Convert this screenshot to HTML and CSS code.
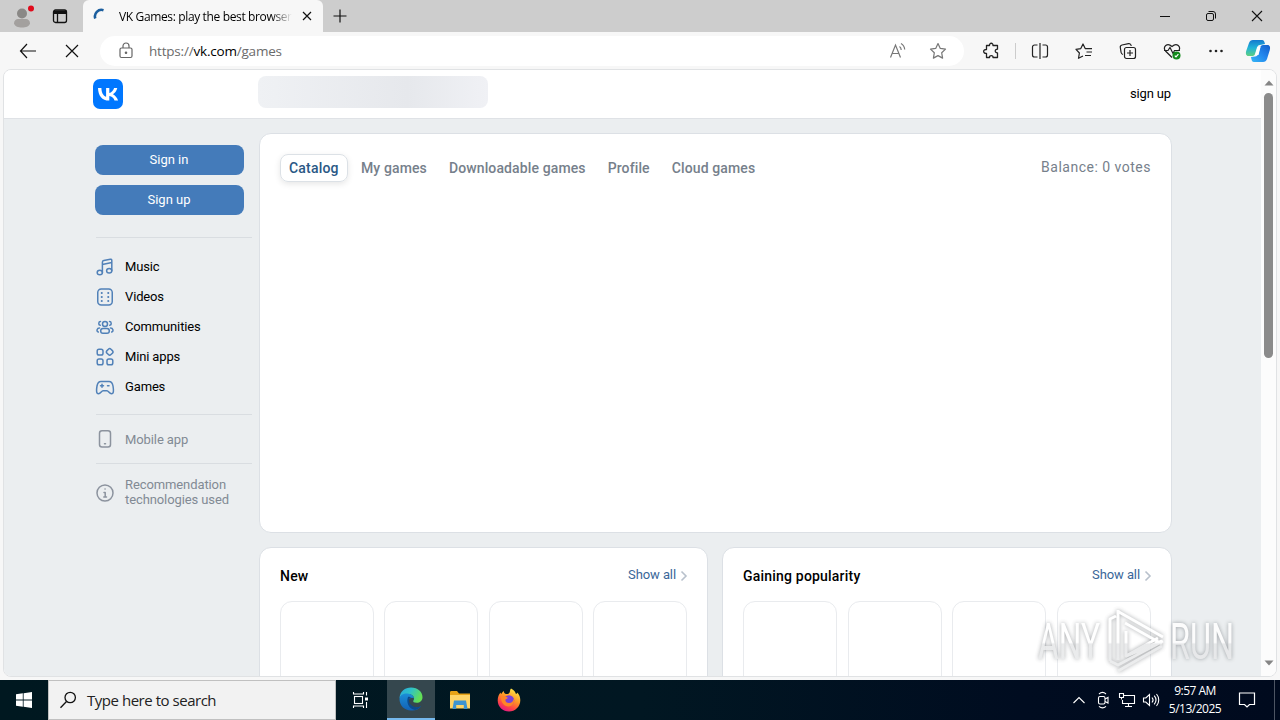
FILE: index.html
```html
<!DOCTYPE html>
<html lang="en">
<head>
    <meta charset="UTF-8">
    <meta name="viewport" content="width=device-width, initial-scale=1.0">
    <title>VK Games: play the best browser games</title>
    <link rel="stylesheet" href="styles.css">
</head>
<body>
<div class="desktop">

    <!-- tab strip -->
    <div class="tabstrip">
        <div class="tab-tools">
            <svg class="profile" width="24" height="28" viewBox="0 0 24 28">
                <circle cx="12" cy="11.500" r="5" fill="#8a8886"/>
                <path d="M4 21.500c0-3 2-4.500 4-4.500h8c2 0 4 1.500 4 4.500-1 3-4 4-8 4s-7-1-8-4z" fill="#a3a09e"/>
                <circle cx="21" cy="6.500" r="3" fill="#e00b1c"/>
            </svg>
            <svg width="16" height="16" viewBox="0 0 16 16" fill="none" stroke="#111" stroke-width="1.300">
                <rect x="1.500" y="2" width="13" height="12.500" rx="2"/>
                <path d="M2 3.500h12M2 5h12" stroke-width="2"/>
                <path d="M5.500 5v9"/>
            </svg>
        </div>
        <div class="tab">
            <svg class="spinner" width="16" height="16" viewBox="0 0 16 16" fill="none">
                <path d="M2.300 10.500A6.500 6.500 0 0 1 10.500 2.200" stroke="#1b5e9e" stroke-width="2.600"/>
            </svg>
            <span class="tab-title">VK Games: play the best browser</span>
            <svg width="10" height="10" viewBox="0 0 10 10" stroke="#111" stroke-width="1.200"><path d="M1 1l8 8M9 1l-8 8"/></svg>
        </div>
        <svg class="new-tab" width="14" height="14" viewBox="0 0 14 14" stroke="#111" stroke-width="1.200"><path d="M7 .500v13M.500 7h13"/></svg>
        <div class="window-buttons">
            <svg width="12" height="12" viewBox="0 0 12 12" stroke="#111"><path d="M1 6.500h10"/></svg>
            <svg width="12" height="12" viewBox="0 0 12 12" fill="none" stroke="#111"><rect x="1.500" y="3.500" width="7" height="7" rx="1.500"/><path d="M3.500 1.500h4.500a2.500 2.500 0 0 1 2.500 2.500v4.500"/></svg>
            <svg width="12" height="12" viewBox="0 0 12 12" stroke="#111" stroke-width="1.100"><path d="M1 1l10 10M11 1L1 11"/></svg>
        </div>
    </div>

    <!-- toolbar -->
    <div class="toolbar">
        <svg class="back" width="18" height="16" viewBox="0 0 18 16" fill="none" stroke="#111" stroke-width="1.200"><path d="M8 1L1.500 8 8 15M1.500 8H17"/></svg>
        <svg class="stop" width="14" height="14" viewBox="0 0 14 14" stroke="#111" stroke-width="1.200"><path d="M1 1l12 12M13 1L1 13"/></svg>
        <div class="address">
            <svg width="14" height="17" viewBox="0 0 14 17" fill="none" stroke="#666" stroke-width="1.200"><rect x="1" y="6" width="12" height="9.500" rx="1.500"/><path d="M4 6V4a3 3 0 0 1 6 0v2"/><circle cx="7" cy="10.800" r=".700" fill="#666"/></svg>
            <span class="url">https://<b>vk.com</b>/games</span>
            <svg class="read" width="18" height="18" viewBox="0 0 18 18" fill="none" stroke="#777" stroke-width="1.200"><path d="M1.500 15.500L6.500 3 11.500 15.500M3.300 11.500h6.500M10.500 4.500c1.200.8 1.700 2 1.700 3.500M12 1.500c2.300 1.300 3.500 3.300 3.700 6"/></svg>
            <svg class="fav" width="18" height="18" viewBox="0 0 18 18" fill="none" stroke="#777" stroke-width="1.200" stroke-linejoin="round"><path d="M9 1.500l2.300 4.900 5.200.700-3.800 3.700.900 5.300L9 13.600l-4.600 2.500.900-5.300L1.500 7.100l5.200-.700z"/></svg>
        </div>
        <div class="actions">
            <svg width="18" height="18" viewBox="0 0 18 18" fill="none" stroke="#222" stroke-width="1.300" stroke-linejoin="round"><path d="M4.500 3.500h3c-.300-3 3.800-3 3.500 0h4.500v3.700c-3-.200-3 3.800 0 3.600v4.700H11c.300-2.500-3.700-2.500-3.500 0h-3v-4.200c-3.800.500-3.800-4 0-3.800z"/></svg>
            <i class="divider"></i>
            <svg width="18" height="18" viewBox="0 0 18 18" fill="none" stroke="#222" stroke-width="1.200"><path d="M6.500 3H3.500a2 2 0 0 0-2 2v8a2 2 0 0 0 2 2h3M11.500 3h3a2 2 0 0 1 2 2v8a2 2 0 0 1-2 2h-3M9 1v16"/></svg>
            <svg width="18" height="18" viewBox="0 0 18 18" fill="none" stroke="#222" stroke-width="1.200" stroke-linejoin="round"><path d="M8 14l-4.500 2.300.900-5.300L1 7.300l4.800-.700L8 2l2.200 4.600H17M11.500 10H17M10 13.500h6"/></svg>
            <svg width="18" height="18" viewBox="0 0 18 18" fill="none" stroke="#222" stroke-width="1.200"><rect x="5.500" y="5.500" width="11" height="11" rx="2"/><path d="M11 8v6M8 11h6M4 12.500c-1.200-.300-1.700-1-1.900-2l-.800-5C1 4 1.800 3.300 3 3l6.500-1.300c1.500-.200 2.500.500 2.700 2.300"/></svg>
            <svg width="18" height="18" viewBox="0 0 18 18" fill="none" stroke="#222" stroke-width="1.200"><path d="M9 15.500L2.500 9C-.500 5 4 0 9 4.500 14 0 18.500 5 15.500 9"/><path d="M1 8.500h4l2-3 3 6 1.500-3H17"/><circle cx="13.500" cy="13.500" r="4" fill="#138a1b" stroke="none"/><path d="M11.800 13.600l1.200 1.200 2.400-2.600" stroke="#fff"/></svg>
            <svg width="18" height="18" viewBox="0 0 18 18" fill="#222"><circle cx="3.500" cy="9" r="1.300"/><circle cx="9" cy="9" r="1.300"/><circle cx="14.500" cy="9" r="1.300"/></svg>
            <svg class="copilot" width="26" height="24" viewBox="0 0 26 24">
                <defs>
                    <linearGradient id="cp1" x1="0" y1="0" x2="0" y2="1"><stop offset="0" stop-color="#1579ce"/><stop offset=".5" stop-color="#22b4d8"/><stop offset="1" stop-color="#5fd080"/></linearGradient>
                    <linearGradient id="cp2" x1="0" y1="1" x2="1" y2="0"><stop offset="0" stop-color="#36b7f5"/><stop offset=".5" stop-color="#2387ee"/><stop offset="1" stop-color="#135cc9"/></linearGradient>
                </defs>
                <path d="M8 1h9c2 0 2.500 2 3 4l-5 1c-2 0-3 2-3.500 4L10 15c-.500 1.500-1.500 2-3 2H3.500C1 17 .500 14.500 1.200 12L4 4c.7-2 2-3 4-3z" fill="url(#cp1)"/>
                <path d="M18 23H9c-2 0-2.500-2-3-5l4-.500c2 0 3-1.500 3.500-3.500L15 9c.500-2 1.500-3 3-3h4.500c2.500 0 3 2.500 2.300 5L22 20c-.7 2-2 3-4 3z" fill="url(#cp2)"/>
                <path d="M12.500 8h3l-2 8h-3.300z" fill="#fff"/>
            </svg>
        </div>
    </div>

    <!-- page -->
    <div class="window">
        <div class="page">
            <header class="vk-header">
                <svg class="vk-logo" width="30" height="30" viewBox="0 0 30 30">
                    <rect width="30" height="30" rx="7" fill="#07f"/>
                    <path d="M16 21.600C9.100 21.600 5.200 16.900 5 9h3.400c.1 5.800 2.700 8.200 4.700 8.700V9h3.200v5c2-.2 4.100-2.500 4.800-5h3.200c-.5 3-2.800 5.300-4.400 6.200 1.600.8 4.200 2.800 5.200 6.400h-3.600c-.7-2.400-2.600-4.200-5.200-4.500v4.500z" fill="#fff"/>
                </svg>
                <div class="search-skeleton"></div>
                <a class="header-link">sign up</a>
            </header>

            <div class="vk-body">
                <nav class="sidebar">
                    <button class="btn">Sign in</button>
                    <button class="btn">Sign up</button>
                    <hr>
                    <a class="nav-item">
                        <svg width="20" height="20" viewBox="0 0 20 20"><ellipse cx="4.800" cy="15.500" rx="2.600" ry="2.300"/><ellipse cx="14.200" cy="13.700" rx="2.600" ry="2.300"/><path d="M7.400 15.500V5.200c0-1 .4-1.500 1.400-1.700l6.500-1.300c1-.2 1.500.2 1.500 1.200v10.300M7.400 7.500l9.400-1.900"/></svg>
                        <span>Music</span>
                    </a>
                    <a class="nav-item">
                        <svg width="20" height="20" viewBox="0 0 20 20"><rect x="2.750" y="2" width="14.500" height="16" rx="3.500"/><path class="dots" d="M6.700 6h.1M6.700 10h.1M6.700 14h.1M13.200 6h.1M13.200 10h.1M13.200 14h.1"/></svg>
                        <span>Videos</span>
                    </a>
                    <a class="nav-item">
                        <svg width="20" height="20" viewBox="0 0 20 20"><circle cx="10" cy="7" r="2.500"/><rect x="5.700" y="11.500" width="8.600" height="4.700" rx="2.300"/><path d="M5.500 4.500c-2 0-2.500 3.500-.3 3.800M14.500 4.500c2 0 2.500 3.500.3 3.800M4.500 11c-2.500 0-3.500 3.500-1.200 4M15.500 11c2.500 0 3.500 3.500 1.200 4"/></svg>
                        <span>Communities</span>
                    </a>
                    <a class="nav-item">
                        <svg width="20" height="20" viewBox="0 0 20 20"><rect x="2.200" y="2.200" width="5.800" height="5.800" rx="1.800"/><rect x="2.200" y="12" width="5.800" height="5.800" rx="1.800"/><rect x="12" y="12" width="5.800" height="5.800" rx="1.800"/><rect x="11.900" y="2.100" width="5.600" height="5.600" rx="1.800" transform="rotate(45 14.700 4.900)"/></svg>
                        <span>Mini apps</span>
                    </a>
                    <a class="nav-item">
                        <svg width="20" height="20" viewBox="0 0 20 20"><path d="M6 4.500h8c2.500 0 3.500 1.500 4 4.500.6 3.500 1 7.800-1.500 7.800-2.200 0-3-3-4.500-3H8c-1.500 0-2.300 3-4.500 3C1 16.800 1.400 12.500 2 9c.5-3 1.500-4.500 4-4.500zM7 7.300v3M5.500 8.800h3M12.500 8.800h1.500"/></svg>
                        <span>Games</span>
                    </a>
                    <hr class="tight">
                    <a class="nav-item muted mobile">
                        <svg width="20" height="20" viewBox="0 0 20 20"><rect x="4.500" y="1.700" width="11" height="16.300" rx="2.500"/><path d="M9.500 14.800h1"/></svg>
                        Mobile app
                    </a>
                    <hr class="tight">
                    <a class="nav-item muted tech">
                        <svg width="20" height="20" viewBox="0 0 20 20"><circle cx="10" cy="10" r="8"/><path d="M9 9.500h1.200V14M8.800 14h2.700M10 6h.1"/></svg>
                        <span>Recommendation<br>technologies used</span>
                    </a>
                </nav>

                <main class="content">
                    <section class="card catalog">
                        <div class="tabs">
                            <a class="tabs-item active">Catalog</a>
                            <a class="tabs-item">My games</a>
                            <a class="tabs-item">Downloadable games</a>
                            <a class="tabs-item">Profile</a>
                            <a class="tabs-item">Cloud games</a>
                        </div>
                        <span class="balance">Balance: 0 votes</span>
                    </section>
                    <div class="row">
                        <section class="card shelf">
                            <div class="shelf-head">
                                <h2>New</h2>
                                <a class="show-all">Show all <svg width="8" height="12" viewBox="0 0 8 12"><path d="M1.500 1.500L6 6l-4.500 4.500"/></svg></a>
                            </div>
                            <div class="tiles"><div class="tile"></div><div class="tile"></div><div class="tile"></div><div class="tile"></div></div>
                        </section>
                        <section class="card shelf">
                            <div class="shelf-head">
                                <h2>Gaining popularity</h2>
                                <a class="show-all">Show all <svg width="8" height="12" viewBox="0 0 8 12"><path d="M1.500 1.500L6 6l-4.500 4.500"/></svg></a>
                            </div>
                            <div class="tiles"><div class="tile"></div><div class="tile"></div><div class="tile"></div><div class="tile"></div></div>
                        </section>
                    </div>
                </main>
            </div>
        </div>
        <div class="scrollbar">
            <svg width="10" height="6" viewBox="0 0 10 6"><path d="M5 .500L9.500 5.500h-9z"/></svg>
            <div class="thumb"></div>
            <svg class="down" width="10" height="6" viewBox="0 0 10 6"><path d="M5 5.500L.500.500h9z"/></svg>
        </div>
    </div>

    <!-- taskbar -->
    <div class="taskbar">
        <div class="start">
            <svg width="16" height="16" viewBox="0 0 16 16" fill="#fff"><path d="M0 2.300L6.800 1.300v6.300H0zM7.600 1.200L16 0v7.600H7.600zM0 8.400h6.800v6.300L0 13.700zM7.600 8.400H16V16l-8.400-1.200z"/></svg>
        </div>
        <div class="search">
            <svg width="18" height="18" viewBox="0 0 18 18" fill="none" stroke="#111" stroke-width="1.300"><circle cx="11.200" cy="6.500" r="5.200"/><path d="M7.500 10.500L1.500 16.800"/></svg>
            <span>Type here to search</span>
        </div>
        <div class="task">
            <svg width="18" height="18" viewBox="0 0 18 18" fill="none" stroke="#fff" stroke-width="1.100"><rect x="2.500" y="5.500" width="8" height="7"/><path d="M1.500 1v2h10V1M1.500 17v-2h10v2M14.500 1v3.500M14.500 11v6"/><path d="M13 6.500h3v3h-3z" fill="#fff" stroke="none"/></svg>
        </div>
        <div class="task active">
            <svg width="24" height="24" viewBox="0 0 24 24">
                <defs>
                    <linearGradient id="ed1" x1="0" y1="0" x2="1" y2=".4"><stop offset="0" stop-color="#28a7e0"/><stop offset=".5" stop-color="#2fc2c7"/><stop offset="1" stop-color="#63df55"/></linearGradient>
                    <linearGradient id="ed2" x1="0" y1="0" x2="0" y2="1"><stop offset="0" stop-color="#1b8ed8"/><stop offset="1" stop-color="#1361b5"/></linearGradient>
                </defs>
                <path d="M.500 11C1 4.500 6 .500 12 .500c7 0 11.500 4.500 11.500 9.700 0 3.500-2.600 5.600-5.800 5.600-2.700 0-4-1-3.300-2.300.5-.8.800-1.500.6-2.500-.5-2.500-3-4-6-4C5.500 7 2.500 8.500.500 11z" fill="url(#ed1)"/>
                <path d="M.500 12C.500 8.500 4 6 8.500 6.500c3.500.3 6.200 2.200 6.500 4.800-2.500-1.500-5.500 0-5.500 3 0 4 4.500 6.700 9 6.200 1.400-.2 2.500-.7 3.500-1.200-2.200 3-6 4.700-10 4.200C5.500 23.500.500 18.500.500 12z" fill="url(#ed2)"/>
                <path d="M9 10c-2 5 .5 12 7 13 2.500-.5 4.600-2 6-4-5 3-12 0-12-5.500 0-1.500.8-2.500 2-3-1-.7-2-.9-3-.5z" fill="#0c4a8c"/>
            </svg>
        </div>
        <div class="task">
            <svg width="22" height="20" viewBox="0 0 22 20"><path d="M1 2.500C1 1.500 1.500 1 2.500 1H8l2 2.500h11V10H1z" fill="#e8a317"/><path d="M1 5h20v13.500H1z" fill="#ffd467"/><path d="M5 10.500h12l1.500 8.500h-3.700v-4H7.200v4H3.500z" fill="#3e94d1"/></svg>
        </div>
        <div class="task">
            <svg width="24" height="24" viewBox="0 0 24 24">
                <defs><linearGradient id="ff" x1=".8" y1="0" x2=".3" y2="1"><stop offset="0" stop-color="#fff04a"/><stop offset=".45" stop-color="#ff9526"/><stop offset=".75" stop-color="#ff4645"/><stop offset="1" stop-color="#e31587"/></linearGradient></defs>
                <path d="M14 .500c3 1.200 4.500 4 4.800 5.300.8.200 1.500-.2 1.500-1.300 2 2 3 5 3 7.800C23.300 19 18 23.500 12 23.500S.700 19 .700 12.500C.700 9 2 6 3.500 4.500c.2 1 .5 1.300.8 1.500.7-1.500 1.700-2.500 2.500-3 0 1.500.7 2.700 2 3 1.500.3 3.300-.3 3.800-1.500.5-1.400.5-3 1.400-4z" fill="url(#ff)"/>
                <circle cx="12" cy="12.500" r="5.200" fill="#7b42d8"/>
                <path d="M4 9c2.500-1.500 5-.5 7 1l-2.500 1.500c-.5 2 1 3.500 3.500 3.500 3 0 4.500-2 4.500-4.500 2 4-1 8-5 8-4.500 0-7.500-4-7.500-9.500z" fill="#ff8527"/>
            </svg>
        </div>
        <div class="tray">
            <svg width="14" height="18" viewBox="0 0 14 18"><path d="M1.500 12L7 6.500l5.500 5.500"/></svg>
            <svg width="14" height="18" viewBox="0 0 14 18"><rect x="2.500" y="5.500" width="6.500" height="7.500" rx="1.500"/><path d="M9 8l3-1.500V12L9 10.500M3 3c2-1.800 5-1.800 7 0M3 15.300c2 1.800 5 1.800 7 0"/></svg>
            <svg width="18" height="18" viewBox="0 0 18 18"><path d="M6 4.500h10.500v8H4.500V9M10.500 12.500v3M7 15.500h7M1.500 2.500h4v4h-4zM3.500 6.500v2"/></svg>
            <svg width="18" height="18" viewBox="0 0 18 18"><path d="M1.500 7h2.300L7.500 3.500v11L3.800 11H1.500zM10 6.500c1.300 1.500 1.300 3.500 0 5M12.200 4.700c2.200 2.600 2.200 6 0 8.600M14.500 3c3 3.500 3 8.500 0 12"/></svg>
        </div>
        <div class="clock"><span>9:57 AM</span><span class="date">5/13/2025</span></div>
        <svg class="notify" width="18" height="18" viewBox="0 0 18 18" fill="none" stroke="#fff" stroke-width="1.200"><path d="M1.500 2h15v11.500H11.500L9 16l-2.500-2.500h-5z"/></svg>
        <i class="show-desktop"></i>
    </div>

    <!-- watermark over the page -->
    <svg class="watermark" width="244" height="72" viewBox="0 0 244 72">
        <defs>
            <linearGradient id="fade" gradientUnits="userSpaceOnUse" x1="0" y1="5" x2="0" y2="66">
                <stop offset="0" stop-color="#fff"/>
                <stop offset=".53" stop-color="#fff"/>
                <stop offset=".56" stop-color="#e6e7e8"/>
                <stop offset="1" stop-color="#e9eaeb"/>
            </linearGradient>
        </defs>
        <g class="wm">
            <text x="4" y="54" textLength="62" lengthAdjust="spacingAndGlyphs">ANY</text>
            <text x="136" y="54" textLength="64" lengthAdjust="spacingAndGlyphs">RUN</text>
            <path d="M76 56V14l6-3M85 7l44 25M84 5v50M91 18l37 21M92 26v25l32-18M92 51l36-15M76 56l8 4 45-24M84 66l44-25"/>
        </g>
    </svg>
</div>
</body>
</html>
```

FILE: styles.css
```css
* {
    box-sizing: border-box;
}
body {
    margin: 0;
    font-family: Roboto, Arial, sans-serif;
    font-size: 13px;
    color: #000;
    overflow: hidden;
}
svg {
    flex: none;
    display: block;
}
.desktop {
    position: relative;
    display: flex;
    flex-direction: column;
    width: 1280px;
    height: 720px;
    background: #f7f7f7;
}

/* browser chrome */
.tabstrip {
    display: flex;
    height: 32px;
    background: #cdcdcd;
    font-family: "Open Sans", "Noto Sans", sans-serif;
    align-items: center;
}
.tab-tools {
    display: flex;
    align-items: center;
    gap: 18px;
    width: 83px;
    padding-left: 10px;
}
.tab {
    display: flex;
    align-items: center;
    width: 240px;
    height: 32px;
    padding-left: 10px;
    background: #f7f7f7;
    border-radius: 6px 6px 0 0;
}
.tab-title {
    width: 173px;
    margin: 0 10px 0 10px;
    font-size: 12px;
    letter-spacing: -0.36px;
    white-space: nowrap;
    overflow: hidden;
    -webkit-mask-image: linear-gradient(90deg, #000 88%, transparent);
}
.new-tab {
    margin-left: 10px;
}
.window-buttons {
    display: flex;
    gap: 34px;
    margin-left: auto;
    margin-right: 17px;
}
.toolbar {
    display: flex;
    align-items: center;
    height: 37px;
    padding-left: 19px;
}
.stop {
    margin-left: 28px;
}
.address {
    display: flex;
    align-items: center;
    width: 864px;
    height: 30px;
    margin-left: 21px;
    padding: 0 17px 0 19px;
    background: #fff;
    border-radius: 15px;
}
.url {
    margin-left: 16px;
    font-family: "Open Sans", "Noto Sans", sans-serif;
    font-size: 13.5px;
    letter-spacing: -0.2px;
    color: #6b6b6b;
}
.url b {
    font-weight: normal;
    color: #000;
}
.read {
    margin-left: auto;
}
.fav {
    margin-left: 22px;
}
.actions {
    display: flex;
    align-items: center;
    gap: 26px;
    margin-left: 18px;
}
.divider {
    width: 1px;
    height: 16px;
    margin: 0 -11px;
    background: #ccc;
}
.copilot {
    margin-left: -6px;
}

/* page window */
.window {
    display: flex;
    height: 608px;
    margin: 0 3px 3px;
    border: 1px solid #e0e2e4;
    border-radius: 8px;
    background: #fff;
    overflow: hidden;
}
.page {
    width: 1257px;
    background: #ebeef0;
    overflow: hidden;
}
.vk-header {
    display: flex;
    align-items: center;
    height: 49px;
    padding: 0 90px 0 89px;
    background: #fff;
    border-bottom: 1px solid #dfe2e6;
}
.search-skeleton {
    width: 230px;
    height: 32px;
    margin: 0 0 5px 135px;
    border-radius: 8px;
    background: linear-gradient(90deg, #eff1f4, #e6e8ec 65%, #f0f1f5);
}
.header-link {
    margin: 0 0 2px auto;
    letter-spacing: -0.15px;
}
.vk-body {
    display: flex;
}
.sidebar {
    display: flex;
    flex-direction: column;
    width: 164px;
    margin-left: 91px;
    padding-top: 26px;
}
.btn {
    width: 149px;
    height: 30px;
    margin-bottom: 10px;
    padding: 0 1px 2px 0;
    border: none;
    border-radius: 8px;
    background: #447bba;
    color: #fff;
    font: 13px Roboto, Arial, sans-serif;
}
.sidebar hr {
    width: 156px;
    height: 1px;
    margin: 12px 0 14px 1px;
    border: none;
    background: #d9dde1;
}
.nav-item {
    display: flex;
    align-items: center;
    gap: 10px;
    height: 30px;
    line-height: 15px;
    letter-spacing: -0.15px;
}
.nav-item span {
    padding-bottom: 2px;
}
.nav-item svg {
    fill: none;
    stroke: #5181b8;
    stroke-width: 1.5;
    stroke-linecap: round;
    stroke-linejoin: round;
}
.nav-item .dots {
    stroke-width: 2;
}
.sidebar hr.tight {
    margin: 12px 0 10px 1px;
}
.muted {
    color: #828a94;
    letter-spacing: -0.1px;
}
.muted svg {
    stroke: #8c939e;
}
.sidebar .mobile {
    height: 28px;
    margin-bottom: -2px;
}
.tech {
    height: 38px;
}
.content {
    width: 913px;
    padding-top: 14px;
}
.card {
    background: #fff;
    border: 1px solid #dce0e5;
    border-radius: 12px;
}
.catalog {
    display: flex;
    justify-content: space-between;
    align-items: flex-start;
    height: 400px;
    padding: 20px;
}
.tabs {
    display: flex;
    gap: 4px;
    color: #76808b;
    font-size: 14px;
    font-weight: 500;
    letter-spacing: 0.12px;
}
.tabs-item {
    height: 28px;
    padding: 0 9px;
    line-height: 29px;
    white-space: nowrap;
}
.tabs-item.active {
    width: 68px;
    padding: 0 8px;
    letter-spacing: 0.2px;
    line-height: 27px;
    color: #2a5885;
    border: 1px solid #dce1e6;
    border-radius: 8px;
    box-shadow: 0 2px 6px rgba(0,0,0,0.1);
}
.balance {
    margin-top: 5px;
    font-size: 14px;
    letter-spacing: 0.5px;
    color: #76808b;
}
.row {
    display: grid;
    grid-template-columns: 449px 450px;
    gap: 14px;
    margin-top: 14px;
}
.shelf {
    height: 260px;
    padding: 19px 20px;
}
.shelf-head {
    display: flex;
    justify-content: space-between;
    height: 34px;
}
.shelf-head h2 {
    margin: 0;
    font-size: 14px;
    font-weight: 500;
    line-height: 18px;
    letter-spacing: 0.2px;
}
.show-all {
    display: flex;
    gap: 4px;
    margin-right: -1px;
    color: #3a6799;
    line-height: 16px;
    letter-spacing: -0.1px;
}
.show-all svg {
    margin-top: 3px;
    fill: none;
    stroke: #b8c1cc;
    stroke-width: 1.6;
}
.tiles {
    display: flex;
    justify-content: space-between;
}
.tile {
    width: 94px;
    height: 150px;
    border: 1px solid #e9ebee;
    border-radius: 12px;
}
.scrollbar {
    display: flex;
    flex-direction: column;
    align-items: center;
    width: 15px;
    padding: 10px 0;
    background: #fcfcfc;
}
.scrollbar svg {
    fill: #858585;
}
.thumb {
    width: 9px;
    height: 265px;
    margin-top: 7px;
    border-radius: 5px;
    background: #8b8b8b;
}
.down {
    margin-top: auto;
}

/* taskbar */
.taskbar {
    display: flex;
    height: 40px;
    color: #fff;
    background: linear-gradient(90deg, #001820, #011722 50%, #000c20 80%, #000a1e);
    font-family: "Open Sans", "Noto Sans", sans-serif;
}
.start, .task {
    display: flex;
    align-items: center;
    justify-content: center;
    width: 48px;
}
.task {
    width: 49px;
}
.task.active {
    width: 48px;
    margin-left: 2px;
    background: #35474e;
    border-bottom: 2px solid #76b9ed;
}
.search {
    display: flex;
    align-items: center;
    gap: 10px;
    width: 288px;
    padding-left: 10px;
    border: 1px solid #c0c0c0;
    background: #f2f2f2;
    color: #222;
    font-size: 15px;
    letter-spacing: -0.47px;
}
.tray {
    display: flex;
    align-items: center;
    gap: 8px;
    margin-left: auto;
}
.tray svg {
    fill: none;
    stroke: #fff;
    stroke-width: 1.1;
}
.tray svg:nth-child(2), .tray svg:nth-child(3) {
    margin-left: 2px;
    margin-right: -2px;
}
.clock {
    display: flex;
    flex-direction: column;
    align-items: center;
    width: 52px;
    margin: 2px 0 0 9px;
    font-size: 12px;
    line-height: 18px;
    letter-spacing: -0.5px;
    white-space: nowrap;
}
.notify {
    margin: 11px 18px 0 17px;
}
.show-desktop {
    width: 6px;
    border-left: 1px solid #4d5563;
}

.watermark {
    position: absolute;
    left: 1034px;
    top: 605px;
    filter: drop-shadow(0 0 2px rgba(80,85,90,0.6));
    opacity: 0.85;
}
.wm text {
    font-family: Roboto, Arial, sans-serif;
    font-size: 50px;
    fill: url(#fade);
}
.wm path {
    fill: none;
    stroke: url(#fade);
    stroke-width: 3;
    stroke-linejoin: round;
}
```
